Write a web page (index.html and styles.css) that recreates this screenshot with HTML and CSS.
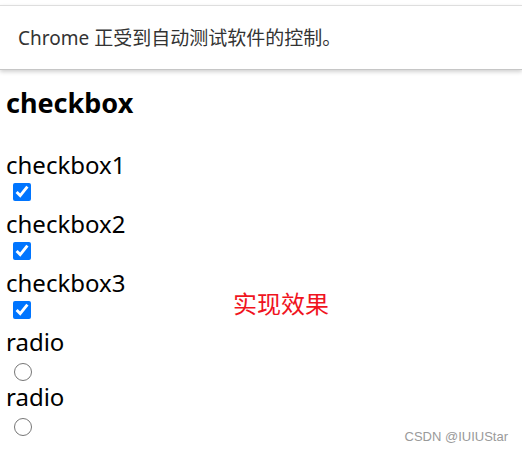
FILE: index.html
```html
<!DOCTYPE html>
<html lang="zh-CN">
<head>
    <meta charset="UTF-8" />
    <meta name="viewport" content="width=device-width, initial-scale=1" />
    <title>checkbox</title>
    <link rel="stylesheet" href="styles.css">
</head>
<body>

    <div class="info-bar">Chrome 正受到自动测试软件的控制。</div>

    <div class="page">
        <h1>checkbox</h1>

        <div class="field">
            <div class="field-label">checkbox1</div>
            <div class="field-input field-check"><input type="checkbox" checked></div>
        </div>
        <div class="field">
            <div class="field-label">checkbox2</div>
            <div class="field-input field-check"><input type="checkbox" checked></div>
        </div>
        <div class="field">
            <div class="field-label">checkbox3</div>
            <div class="field-input field-check"><input type="checkbox" checked></div>
        </div>
        <div class="field">
            <div class="field-label">radio</div>
            <div class="field-input field-radio"><input type="radio" name="r1"></div>
        </div>
        <div class="field">
            <div class="field-label">radio</div>
            <div class="field-input field-radio"><input type="radio" name="r2"></div>
        </div>
    </div>

    <!-- annotation + watermark sit over the screenshot -->
    <div class="note">实现效果</div>
    <div class="watermark">CSDN @IUIUStar</div>

</body>
</html>
```

FILE: styles.css
```css
body {
    font-family: 'Noto Sans', 'Noto Sans CJK SC', sans-serif;
    background-color: #ffffff;
    color: #000;
    margin: 0;
    padding: 0;
    position: relative;
    min-height: 451px;
    overflow: hidden;
}

.info-bar {
    margin-top: 5px;
    height: 65px;
    border-top: 1px solid #dedede;
    border-bottom: 1px solid #c6c6c6;
    box-shadow: 0 2px 4px rgba(0, 0, 0, 0.18);
    display: flex;
    align-items: center;
    padding-left: 18px;
    padding-bottom: 1px;
    box-sizing: border-box;
    font-size: 19px;
    color: #333;
}

.page {
    padding: 0 6px;
}

h1 {
    font-size: 27px;
    line-height: 32px;
    font-weight: bold;
    margin: 17px 0 0;
}

.field {
    display: flex;
    flex-direction: column;
}

.field:first-of-type {
    margin-top: 32px;
}

.field-label {
    font-size: 24px;
    line-height: 28px;
    height: 28px;
}

.field-input {
    display: flex;
    align-items: flex-start;
    padding-left: 7px;
}

.field-check {
    height: 31px;
    padding-top: 4px;
    box-sizing: border-box;
}

.field-radio {
    height: 27px;
    padding-top: 7px;
    padding-left: 8px;
    box-sizing: border-box;
}

.field-input input {
    width: 18px;
    height: 18px;
    margin: 0;
}

.note {
    position: absolute;
    left: 233px;
    top: 289px;
    font-size: 24px;
    line-height: 30px;
    color: #f0141e;
}

.watermark {
    position: absolute;
    right: 14px;
    top: 429px;
    font-family: 'Liberation Sans', Arial, sans-serif;
    font-size: 13px;
    color: #9a9a9a;
}
```
